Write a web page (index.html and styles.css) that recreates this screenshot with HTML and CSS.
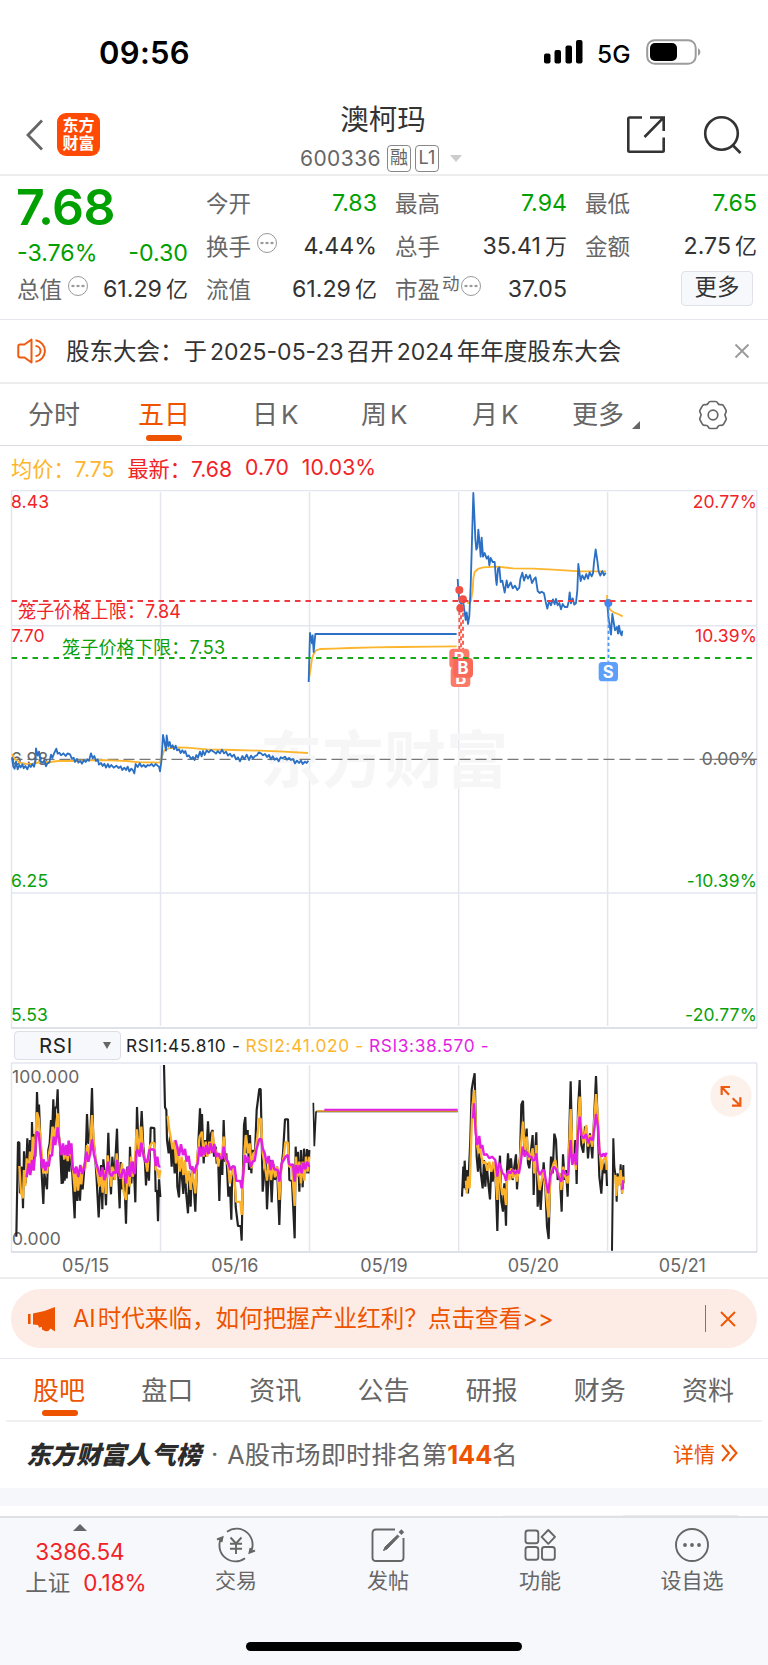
FILE: index.html
```html
<!DOCTYPE html>
<html lang="zh-CN">
<head>
<meta charset="utf-8">
<title>澳柯玛 600336</title>
<link rel="stylesheet" href="styles.css">
</head>
<body>
<div class="screen">
  <div class="status">
    <span class="clock">09:56</span>
    <div class="status-right">
      <svg width="40" height="24" viewBox="0 0 40 24"><rect x="0" y="13.500" width="6.500" height="10" rx="2"/><rect x="10.500" y="10" width="6.500" height="13.500" rx="2"/><rect x="21.500" y="5.500" width="6.500" height="18" rx="2"/><rect x="32" y="0" width="6.500" height="23.500" rx="2"/></svg>
      <span class="net">5G</span>
      <svg width="56" height="26" viewBox="0 0 56 26"><rect x="1.200" y="1.200" width="48.500" height="23.600" rx="7.500" fill="none" stroke="#9c9c9c" stroke-width="2"/><rect x="4" y="4" width="27" height="18" rx="5"/><path d="M52 9 a4.500 4.500 0 0 1 0 8z" fill="#9c9c9c"/></svg>
    </div>
  </div>

  <header class="head">
    <div class="head-left">
      <svg width="18" height="32" viewBox="0 0 18 32" fill="none" stroke="#666" stroke-width="2.800"><path d="M16 1.500 L2 16 L16 30.500"/></svg>
      <div class="logo"><span>东方</span><span>财富</span></div>
    </div>
    <div class="head-mid">
      <h1>澳柯玛</h1>
      <div class="code"><span class="num">600336</span><span class="tag">融</span><span class="tag l1">L1</span><i class="caret"></i></div>
    </div>
    <div class="head-right">
      <svg width="40" height="40" viewBox="0 0 40 40" fill="none" stroke="#333" stroke-width="2.600"><path d="M16 2.500H3.500Q2.300 2.500 2.300 3.700V35.500Q2.300 36.700 3.500 36.700H36.500Q37.700 36.700 37.700 35.500V22.500M24 2.500H37.700V16M37 3.200L18.500 22"/></svg>
      <svg width="40" height="40" viewBox="0 0 40 40" fill="none" stroke="#333" stroke-width="2.600"><circle cx="18.500" cy="18.500" r="16.300"/><path d="M29.500 30 L37.500 38"/></svg>
    </div>
  </header>

  <section class="quote">
    <div class="q1">
      <b class="price">7.68</b>
      <div class="row"><span class="g">-3.76%</span><span class="g">-0.30</span></div>
      <div class="row"><label>总值</label><i class="dots"></i><span>61.29<em>亿</em></span></div>
    </div>
    <div class="qc">
      <div class="row"><label>今开</label><span class="g">7.83</span></div>
      <div class="row"><label>换手</label><i class="dots"></i><span>4.44%</span></div>
      <div class="row"><label>流值</label><span>61.29<em>亿</em></span></div>
    </div>
    <div class="qc">
      <div class="row"><label>最高</label><span class="g">7.94</span></div>
      <div class="row"><label>总手</label><span>35.41<em>万</em></span></div>
      <div class="row"><label>市盈<sup>动</sup></label><i class="dots tight"></i><span>37.05</span></div>
    </div>
    <div class="qc">
      <div class="row"><label>最低</label><span class="g">7.65</span></div>
      <div class="row"><label>金额</label><span>2.75<em>亿</em></span></div>
      <div class="row"><button class="more">更多</button></div>
    </div>
  </section>

  <section class="news">
    <svg width="32" height="26" viewBox="0 0 32 26" fill="none" stroke="#ee5a10" stroke-width="2" stroke-linejoin="round"><path d="M14.500 1.500V24.500L7.500 19.500H3Q1.300 19.500 1.300 17.500V8.500Q1.300 6.500 3 6.500H7.500Z"/><path d="M18.500 8A5 5 0 0 1 18.500 18M18.500 2.200A10.900 10.900 0 0 1 18.500 23.800"/></svg>
    <p>股东大会：于<span class="n">2025-05-23</span>召开<span class="n">2024</span>年年度股东大会</p>
    <svg width="16" height="16" viewBox="0 0 16 16" stroke="#999" stroke-width="1.800"><path d="M1.500 1.500L14.500 14.500M14.500 1.500L1.500 14.500"/></svg>
  </section>

  <nav class="periods">
    <span>分时</span><span class="on">五日</span><span>日<i>K</i></span><span>周<i>K</i></span><span>月<i>K</i></span><span class="pm">更多<svg width="8" height="8" viewBox="0 0 8 8"><path d="M8 0V8H0Z" fill="#666"/></svg></span>
    <svg class="gear" width="30" height="30" viewBox="-15 -15 30 30" fill="none" stroke="#666" stroke-width="1.700" stroke-linejoin="round"><path d="M-2.500 -13.500H2.500Q4 -13.500 4.800 -11.800Q5.900 -9.900 8 -10.300Q9.900 -10.500 10.800 -8.800L13 -4.900Q13.700 -3.500 12.600 -2Q11.200 0 12.600 2Q13.700 3.500 13 4.900L10.800 8.800Q9.900 10.500 8 10.300Q5.900 9.900 4.800 11.800Q4 13.500 2.500 13.500H-2.500Q-4 13.500 -4.800 11.800Q-5.900 9.900 -8 10.300Q-9.900 10.500 -10.800 8.800L-13 4.900Q-13.700 3.500 -12.600 2Q-11.200 0 -12.600 -2Q-13.700 -3.500 -13 -4.900L-10.800 -8.800Q-9.900 -10.500 -8 -10.300Q-5.900 -9.900 -4.800 -11.800Q-4 -13.500 -2.500 -13.500Z"/><circle r="4.800"/></svg>
  </nav>

  <div class="legend"><span class="y">均价：7.75</span><span>最新：7.68</span><span>0.70</span><span>10.03%</span></div>

  <svg class="chart" width="768" height="539" viewBox="0 490 768 539">
    <g fill="none" stroke="#e3e6ef" stroke-width="1.500">
      <path d="M11.500 490.500H757M11.500 625.700H757M11.500 893H757M160.500 492V1026M309.500 492V1026M458.700 492V1026M607.600 492V1026M11.500 490V1028M756.800 490V1028"/>
      <path d="M11 1028H757" stroke="#d4d7e0"/>
    </g>
    <text class="mark" x="260" y="783" textLength="248" lengthAdjust="spacingAndGlyphs">东方财富</text>
    <path d="M11.500 759.300H757" stroke="#777" stroke-width="1.300" stroke-dasharray="11 5" fill="none"/>
    <g class="ax"><text x="11" y="508" class="r">8.43</text><text x="11" y="642" class="r">7.70</text><text x="11" y="764.500">6.98</text><text x="11" y="887" class="gn">6.25</text><text x="11" y="1021" class="gn">5.53</text></g>
    <g class="ax end"><text x="757" y="508" class="r">20.77%</text><text x="757" y="642" class="r">10.39%</text><text x="757" y="764.500">0.00%</text><text x="757" y="887" class="gn">-10.39%</text><text x="757" y="1021" class="gn">-20.77%</text></g>
    <path d="M702 759.300H756" stroke="#777" stroke-width="1"/>
    <g fill="none" stroke-linejoin="round" stroke-width="5.500" transform="translate(0 480) scale(.33333)">
      <polyline stroke="#fcb52c" points="36,822 45,838 60,848 85,853 105,850 120,846 150,846 175,843 220,843 260,841 300,840 350,842 380,843 420,847 455,847 480,848 486,830 492,812 505,805 530,802 560,803 620,808 700,810 780,812 850,815 924,819"/>
      <polyline stroke="#2b70c4" points="36,832 40,860 44,866 48,845 53,868 58,855 62,862 67,853 71,865 76,858 82,868 87,855 92,861 97,852 102,860 106,845 108,805 113,827 117,815 122,845 128,848 133,841 138,859 142,850 148,848 153,824 157,834 162,821 169,806 173,821 178,818 183,826 190,820 197,828 203,820 210,823 216,837 221,833 225,846 231,837 235,848 241,843 246,851 252,840 257,846 262,838 267,842 273,820 278,835 283,828 288,843 293,838 297,854 303,849 308,858 313,851 318,863 324,852 328,862 334,855 341,863 349,857 356,864 362,859 367,870 373,863 378,870 383,860 388,874 394,866 399,871 403,880 407,852 413,861 419,850 425,860 431,855 437,861 443,855 449,857 455,852 461,859 467,852 473,857 477,860 480,874 484,845 489,765 494,790 498,812 500,766 505,799 509,786 513,803 518,796 522,808 527,797 531,811 537,808 542,819 547,811 552,819 556,813 561,829 567,826 573,837 579,831 584,840 589,825 594,833 600,815 605,829 609,813 614,825 620,811 626,817 633,810 641,815 648,821 653,813 660,820 666,809 672,820 678,815 684,827 690,821 696,830 702,824 708,838 714,832 720,844 727,828 733,838 740,824 747,840 753,827 759,835 765,828 771,826 776,817 783,820 789,826 795,822 801,831 807,825 813,838 818,829 824,839 830,835 836,844 842,832 848,835 855,830 861,839 867,834 873,840 879,837 885,850 891,842 897,849 903,842 908,852 915,845 920,849 925,842"/>
    </g>
    <g fill="none" stroke-linejoin="round" stroke-width="5.500" transform="translate(300 480) scale(.33333)">
      <polyline stroke="#fcb52c" points="26,602 32,565 36,535 41,522 47,512 60,507 100,506 150,504 220,502 300,501 400,500 470,499"/>
      <polyline stroke="#2b70c4" points="26,606 30,459 36,490 38,466 41,516 46,462 470,462"/>
      <polyline stroke="#fcb52c" points="501,368 507,370 513,362 518,330 520,295 524,276 534,267 550,262 590,260 640,265 700,266 760,269 840,274 918,274"/>
      <polyline stroke="#2b70c4" points="473,297 475,330 478,362 484,372 488,354 493,390 497,420 500,397 504,432 508,408 512,320 516,180 520,39 524,125 526,177 529,209 532,203 535,149 540,202 542,230 545,173 549,230 554,219 560,236 565,229 568,256 572,234 578,246 584,246 588,300 590,315 594,266 598,262 602,306 607,302 614,338 620,301 624,323 632,307 638,325 645,317 652,330 658,323 661,297 667,278 672,302 678,284 684,296 690,285 696,309 703,296 707,292 713,333 719,339 725,335 732,340 737,365 742,386 747,364 753,376 759,358 764,373 768,357 773,376 778,369 783,388 788,372 794,381 802,381 806,365 809,337 813,370 818,355 823,374 828,369 832,330 835,252 839,283 842,303 847,286 853,298 859,282 864,296 869,277 875,289 879,280 882,247 887,208 892,242 896,275 901,287 907,273 912,286 917,278"/>
      <polyline stroke="#fcb52c" points="921,345 923,375 931,390 941,397 954,402 968,409"/>
      <polyline stroke="#2b70c4" points="921,360 925,410 928,429 933,464 937,402 941,426 945,451 951,441 954,461 957,437 961,459 965,466 967,452"/>
      <g stroke="#f75a4a" stroke-dasharray="12 9"><path d="M478 330V510M483 385V560M489 356V540"/></g>
      <g fill="#f05046" stroke="none"><circle cx="478" cy="330" r="12"/><circle cx="489" cy="358" r="12"/><circle cx="481" cy="385" r="12"/></g>
      <g stroke="none"><rect x="448" y="506" width="60" height="58" rx="11" fill="#fb7a68"/><text class="mk" x="478" y="555">B</text><rect x="452" y="562" width="59" height="59" rx="11" fill="#fb7a68"/><text class="mk" x="482" y="612">B</text><rect x="460" y="534" width="59" height="59" rx="11" fill="#fa6858"/><text class="mk" x="489" y="583">B</text></g>
      <path d="M925.500 380V545" stroke="#4e96f5" stroke-dasharray="10 8"/><circle cx="925" cy="369" r="12" fill="#4287ee"/>
      <rect x="896" y="546" width="58" height="58" rx="11" fill="#5ca0fb"/><text class="mk" x="925" y="595">S</text>
    </g>
    <path d="M11.500 601H757" stroke="#ee3a40" stroke-width="2" stroke-dasharray="5.500 5" fill="none"/>
    <path d="M11.500 658H757" stroke="#18a81c" stroke-width="2" stroke-dasharray="5.500 5" fill="none"/>
    <text class="cage r" x="18" y="618" textLength="163">笼子价格上限：7.84</text>
    <text class="cage gn" x="62" y="654" textLength="163">笼子价格下限：7.53</text>
  </svg>

  <div class="tool"><div class="select"><span>RSI</span><i></i></div><span>RSI1:45.810 -</span><span class="y">RSI2:41.020 -</span><span class="m">RSI3:38.570 -</span></div>

  <div class="rsi">
  <svg class="chart" width="768" height="191" viewBox="0 1062 768 191">
    <g fill="none" stroke="#e3e6ef" stroke-width="1.500"><path d="M11 1063H757M160.500 1065V1251M309.500 1065V1251M458.700 1065V1251M607.600 1065V1251M11.500 1063V1252M756.800 1063V1252"/><path d="M11 1252H757" stroke="#d4d7e0"/></g>
    <g class="ax"><text x="12" y="1082.500">100.000</text><text x="12" y="1245">0.000</text></g>
    <g fill="none" stroke-linejoin="bevel" transform="translate(0 1010) scale(.33333)">
      <polyline stroke="#222" stroke-width="6.500" points="49,680 54,396 58,398 60,550 66,470 69,595 72,424 77,520 82,385 86,490 90,390 94,460 96,336 99,450 103,372 106,440 109,340 111,246 114,330 117,284 121,390 126,510 130,582 133,490 137,515 141,538 145,420 149,400 153,330 157,350 160,268 163,370 166,292 170,293 173,238 176,370 180,405 185,522 187,420 189,520 192,450 194,512 196,430 200,505 204,420 208,485 213,402 217,490 224,625 227,490 232,573 235,480 240,572 244,490 248,538 253,475 257,440 261,312 265,400 269,397 272,350 276,234 280,390 285,430 290,510 296,622 300,540 303,465 307,598 310,448 313,480 318,586 322,458 325,368 329,490 333,553 337,440 343,510 351,356 355,500 359,595 362,456 367,538 373,500 378,641 382,470 387,553 390,410 394,520 398,455 403,508 406,577 411,291 416,420 419,430 425,303 430,410 435,460 438,526 443,448 447,512 452,353 463,354 467,545 471,541 474,634 477,508 481,561"/>
      <polyline stroke="#222" stroke-width="6.500" points="492,165 495,292 499,300 501,390 506,430 510,380 515,470 519,400 524,490 529,407 532,530 537,562 541,466 545,492 550,552 554,460 558,545 564,610 568,490 572,590 576,470 582,542 586,605 590,490 595,400 600,295 604,420 606,312 611,460 615,390 619,440 624,334 629,430 633,370 638,360 642,440 647,410 650,461 654,430 658,573 662,430 667,495 671,330 675,455 679,430 685,560 690,530 694,629 697,470 703,470 707,590 714,648 722,648 725,692 729,480 732,345 736,321 740,430 743,360 747,480 750,375 754,490 758,420 765,430 770,300 778,237 782,237 786,430 788,545 793,490 797,460 801,598 806,490 810,450 815,577 820,462 825,510 831,470 838,645 843,480 849,430 855,328 864,328 868,510 876,513 880,600 884,685 887,410 891,500 894,425 898,545 903,420 908,532 912,416 917,490 921,417 925,490 928,420"/>
      <polyline stroke="#fcb22b" stroke-width="7" points="58,468 63,548 69,565 72,480 76,528 80,445 85,490 90,425 95,478 98,380 104,440 108,345 111,307 116,325 120,370 126,440 130,490 136,478 141,490 147,430 153,400 158,350 162,382 167,355 173,310 177,380 183,430 188,410 193,448 198,412 203,453 209,410 214,440 219,480 225,545 228,470 234,542 240,490 244,523 249,470 256,475 261,405 267,440 271,395 276,315 281,390 286,445 292,490 298,530 303,485 308,548 312,480 318,552 323,436 328,475 333,530 337,470 345,510 350,430 355,480 361,506 366,460 371,545 378,570 383,480 389,530 393,440 398,500 404,470 408,385 411,358 417,430 424,350 430,430 436,448 442,485 449,410 456,398 464,400 467,480 472,478 477,505 481,480"/>
      <polyline stroke="#fcb22b" stroke-width="7" points="503,318 508,360 512,382 518,418 524,392 528,460 533,410 539,485 545,440 550,495 555,450 560,520 566,482 572,540 577,480 582,520 586,550 592,440 599,380 606,365 611,440 617,395 622,440 628,395 633,430 638,365 643,425 648,418 655,470 660,430 666,440 671,380 677,450 684,465 690,520 698,470 704,510 708,575 721,576 725,615 730,490 734,415 738,375 744,430 749,400 755,475 760,430 766,425 772,380 778,325 783,328 788,430 795,470 801,512 807,455 813,510 819,462 825,502 832,470 838,570 844,470 851,440 856,397 863,397 868,470 876,472 884,588 888,440 893,500 898,455 903,520 908,455 913,512 918,440 923,485 928,440"/>
      <polyline stroke="#e31fe3" stroke-width="7.500" points="80,502 86,460 91,495 96,450 101,482 106,420 110,365 116,370 120,410 126,475 131,448 136,482 141,455 146,470 151,435 156,438 161,380 166,405 173,352 178,395 184,435 189,400 194,435 199,405 203,438 206,392 210,432 214,400 218,470 224,490 229,470 235,500 241,465 247,492 253,472 259,425 265,455 271,430 276,388 282,435 289,460 295,480 301,500 307,472 313,510 318,495 324,455 329,490 335,498 341,485 347,490 351,450 357,490 363,505 369,478 373,480 378,520 384,470 390,500 395,455 401,490 405,490 409,425 414,420 419,440 424,398 431,440 437,455 442,455 448,420 455,418 463,420 467,468 472,440 476,470 481,468"/>
      <polyline stroke="#e31fe3" stroke-width="7.500" points="526,390 532,412 537,437 543,403 549,435 555,417 560,455 566,438 571,477 577,470 583,490 588,470 593,460 599,410 604,440 609,410 614,435 619,405 625,432 631,400 637,428 643,402 648,440 655,430 661,445 667,445 671,410 677,445 684,455 691,480 697,470 704,470 709,512 721,513 725,535 730,490 735,435 740,458 745,440 752,470 758,455 764,452 769,420 778,387 784,388 788,415 794,430 800,460 806,438 812,480 817,450 823,478 833,480 838,515 845,460 851,450 857,440 863,435 867,462 873,465 879,463 884,515 889,465 894,490 899,465 905,490 910,458 916,478 921,455 928,470"/>
    </g>
    <g fill="none" stroke-linejoin="bevel" transform="translate(300 1010) scale(.33333)">
      <path d="M40 278L43 409L48 306L52 304H473" stroke="#222" stroke-width="5"/><path d="M50 303H473" stroke="#fcb22b" stroke-width="4"/><path d="M73 299H473" stroke="#e31fe3" stroke-width="6"/>
      <polyline stroke="#222" stroke-width="6.500" points="486,560 490,470 492,535 494,452 498,540 501,480 504,550 507,478 511,390 515,240 519,215 524,190 527,330 530,440 534,485 539,420 542,485 548,535 552,450 556,530 560,460 565,520 570,568 574,470 578,515 583,470 587,510 592,663 596,500 600,437 604,575 609,605 613,520 618,647 621,480 624,430 628,480 633,445 638,510 643,470 648,433 651,538 656,465 660,445 664,284 669,272 673,430 680,356 684,460 688,475 693,420 698,375 701,555 705,430 709,367 713,590 717,520 722,600 726,530 731,457 736,530 741,650 746,687 750,520 753,440 758,490 763,371 768,390 773,510 779,490 785,605 789,433 794,510 798,480 803,560 807,400 812,214 817,440 822,460 826,390 830,522 834,300 839,210 844,405 850,428 855,350 859,355 864,445 870,370 877,445 882,330 888,198 893,330 898,500 904,551 909,460 913,490 918,450 921,528"/>
      <polyline stroke="#fcb22b" stroke-width="7" points="498,512 500,550 504,500 509,535 513,410 517,290 523,240 527,335 531,405 536,430 540,400 544,440 550,460 556,455 562,482 568,455 574,485 580,455 586,490 592,570 597,465 602,520 607,555 612,535 618,585 622,490 628,510 633,475 639,505 645,480 651,515 656,480 661,430 665,380 669,335 674,420 680,380 686,450 693,435 698,415 703,490 709,405 713,490 719,540 725,510 731,480 737,530 742,590 746,622 750,530 755,480 761,460 766,450 772,490 778,490 784,540 790,470 796,500 803,520 808,400 812,297 818,430 824,440 828,480 833,350 839,260 844,360 850,400 859,345 864,410 869,375 877,410 883,330 888,252 894,330 898,410 904,480 910,450 918,440 920,480"/>
      <polyline stroke="#e31fe3" stroke-width="7" points="519,325 522,280 527,370 532,405 538,378 542,415 547,405 552,435 560,432 568,445 576,440 586,450 592,500 597,458 602,470 607,488 613,495 618,512 624,482 631,490 638,478 645,492 651,482 657,490 662,460 668,410 674,440 680,425 687,440 694,440 698,452 704,450 709,430 714,480 720,495 727,480 733,482 739,520 745,550 750,500 756,485 762,470 769,480 776,500 784,515 789,480 796,492 804,495 809,430 812,390 817,465 823,430 828,465 834,370 839,320 844,375 851,385 858,372 865,400 871,382 878,392 884,350 888,312 894,350 899,430 905,440 911,430 915,440 920,428"/>
      <path d="M936 722L940 385L943 470L947 500L950 575L953 490L958 525L962 463L966 550L970 465L971 520" stroke="#222" stroke-width="6"/><path d="M946 495L949 558L953 500L957 525L962 480L967 550L971 500" stroke="#fcb22b" stroke-width="7"/><path d="M965 540L969 510L970 538" stroke="#e31fe3" stroke-width="5"/>
      <circle cx="1293" cy="258" r="62" fill="#fdf1eb"/><path d="M1265 255V231H1290M1267 233L1287 254M1296 287H1321V262M1319 285L1298 265" stroke="#ee5a10" stroke-width="6.500" stroke-linejoin="miter"/>
    </g>
  </svg>
  <div class="dates"><span>05/15</span><span>05/16</span><span>05/19</span><span>05/20</span><span>05/21</span></div>
  </div>

  <section class="promo"><div class="pill">
    <svg width="28" height="26" viewBox="0 0 28 26" fill="#ee5400"><rect x="0" y="8" width="2.600" height="10"/><path d="M5 7.500Q16 6 27 1V25.500L22.500 22.500Q20.500 26 17 25L14 23.500V21L11 21.500L10 19Q7 18.500 5 18.500Z"/></svg>
    <p>AI<span class="ai">时代来临，如何把握产业红利？点击查看&gt;&gt;</span></p>
    <i></i><svg width="16" height="16" viewBox="0 0 16 16" stroke="#ee5400" stroke-width="1.800"><path d="M1 1L15 15M15 1L1 15"/></svg>
  </div></section>

  <nav class="tabs"><span class="on">股吧</span><span>盘口</span><span>资讯</span><span>公告</span><span>研报</span><span>财务</span><span>资料</span></nav>

  <section class="rank"><b class="brand">东方财富人气榜</b><span class="dot">·</span><p>A股市场即时排名第<b>144</b>名</p><a>详情<svg width="17" height="18" viewBox="0 0 17 18" fill="none" stroke="#ee5400" stroke-width="2"><path d="M1 1L8 9L1 17M8.500 1L15.500 9L8.500 17"/></svg></a></section>
  <div class="band"></div>
  <div class="peek"><i></i><i></i></div>

  <footer class="bar">
    <div class="index"><i></i><span class="r">3386.54</span><div>上证<span class="r">0.18%</span></div></div>
    <div class="item"><svg width="40" height="36" viewBox="0 0 40 36" fill="none" stroke="#666" stroke-width="1.900"><path d="M11 4.800A16 16 0 0 1 34.500 25.500M29 31.200A16 16 0 0 1 5.500 10.500M1 12.500L6.500 10.200L5.500 15M39 23.500L33.500 25.800L34.500 21M14.500 10.500L20 16.500L25.500 10.500M20 16.500V27M14 16.800H26M14 21.800H26"/></svg>交易</div>
    <div class="item"><svg width="40" height="36" viewBox="0 0 40 36" fill="none" stroke="#666" stroke-width="1.900"><path d="M27 2.500H8Q4.500 2.500 4.500 6V30.500Q4.500 34 8 34H32Q35.500 34 35.500 30.500V11"/><path d="M29.500 8L17 20L15.500 23.500L19 22L31 9.500Z" fill="#666" stroke-width="1"/><path d="M32 6.500L34.800 3.800" stroke-width="4"/></svg>发帖</div>
    <div class="item"><svg width="40" height="36" viewBox="0 0 40 36" fill="none" stroke="#666" stroke-width="1.900"><rect x="5.500" y="3.500" width="12.800" height="12.800" rx="2.500"/><rect x="5.500" y="20" width="12.800" height="12.800" rx="2.500"/><rect x="22" y="20" width="12.800" height="12.800" rx="2.500"/><path d="M28.300 3L35 9.900L28.300 16.800L21.600 9.900Z" stroke-linejoin="round"/></svg>功能</div>
    <div class="item"><svg width="40" height="36" viewBox="0 0 40 36" fill="none" stroke="#666" stroke-width="1.900"><circle cx="20" cy="18" r="16"/><g fill="#666" stroke="none"><circle cx="13" cy="18" r="1.900"/><circle cx="20" cy="18" r="1.900"/><circle cx="27" cy="18" r="1.900"/></g></svg>设自选</div>
    <div class="home"></div>
  </footer>
</div>
</body>
</html>
```
FILE: styles.css
```css
* { box-sizing: border-box; margin: 0; padding: 0; }
body { background: #fff; font-family: Inter, "Noto Sans CJK SC", sans-serif; color: #333; }
i, em { font-style: normal; }
svg { display: block; flex: none; }
.screen { width: 768px; height: 1665px; overflow: hidden; display: flex; flex-direction: column; }
.screen > * { flex: none; }
.r { color: #f22226; fill: #f22226; }
.gn { fill: #0aa00a; }
.y { color: #fcb52c; }
.m { color: #e31fe3; }

.status { height: 100px; padding: 4px 67px 0 99px; display: flex; align-items: center; justify-content: space-between; color: #000; }
.clock { font-size: 31px; font-weight: 600; line-height: 40px; letter-spacing: .3px; padding-top: 2px; }
.status-right { display: flex; align-items: center; margin-right: -1px; }
.net { font-size: 24.500px; font-weight: 500; margin: 3px 16px 0 13px; width: 33px; line-height: 26px; }

.head { height: 76px; border-bottom: 2px solid #ededf0; display: grid; grid-template-columns: 250px 1fr 250px; }
.head-left { display: flex; align-items: center; padding: 0 0 8px 26px; gap: 13px; }
.head-left svg { margin-top: 2px; }
.logo { width: 43px; height: 43px; border-radius: 9px; background: #ff4a05; color: #fff; font-size: 16px; font-weight: 700; line-height: 18px; display: flex; flex-direction: column; align-items: center; justify-content: center; }
.head-mid { display: flex; flex-direction: column; align-items: center; padding-right: 2px; }
h1 { font-size: 28.500px; font-weight: 400; line-height: 40px; }
.code { display: flex; align-items: center; color: #666; height: 36px; gap: 4px; padding-right: 4px; }
.num { font-size: 21px; letter-spacing: .4px; margin-right: 2px; }
.tag { border: 1.500px solid #888; border-radius: 4px; font-size: 18px; line-height: 23px; height: 27px; width: 24px; text-align: center; }
.caret { border: 6px solid transparent; border-top: 7px solid #ccc; border-bottom: 0; margin-left: 7px; }
.head-right { display: flex; justify-content: flex-end; gap: 37px; padding: 15px 25px 0 0; }

.quote { height: 144px; border-bottom: 1px solid #e3e6ef; padding: 6px 11px 0 17px; display: grid; grid-template-columns: 171px 171px 172px 172px; column-gap: 18px; font-size: 23.200px; }
.price { display: block; height: 50px; line-height: 50px; font-size: 50px; font-weight: 600; color: #00a000; letter-spacing: -.5px; margin-left: -1px; }
.row { display: flex; align-items: center; height: 43px; line-height: 43px; color: #333; }
.q1 .row:nth-of-type(1) { height: 43px; }
.q1 .row:nth-of-type(2) { height: 29px; }
.row > span { margin-left: auto; }
.row > span.g:first-child { margin-left: 0; }
.g { color: #00a000; }
.row em { margin-left: 4px; font-size: 22px; }
.row label { color: #666; font-size: 22.500px; }
.dots { width: 20px; height: 20px; border: 1.700px solid #999; border-radius: 50%; margin: -7px 0 0 6px; background: radial-gradient(circle, #999 1.100px, transparent 1.600px) center / 5px 20px repeat-x; background-clip: content-box; padding: 0 1px; }
.tight { margin-left: 1px; }
sup { font-size: 17.500px; vertical-align: 8px; line-height: 0; margin-left: 2px; }
.more { margin-left: auto; margin-right: 4px; width: 72px; height: 35px; border: 1.500px solid #dfe2ea; border-radius: 4px; background: #f7f8fb; font: inherit; font-size: 22.500px; line-height: 28px; padding-bottom: 3px; color: #333; margin-top: -2px; }

.news { height: 64px; border-bottom: 2px solid #ededf0; padding: 0 18px 0 17px; display: flex; align-items: center; }
.news p { font-size: 23.500px; margin: -3px 0 0 17px; flex: 1; white-space: nowrap; }
.n { margin: 0 3px; font-size: 23px; }

.periods { height: 62px; border-bottom: 1.500px solid #d9dbe2; display: flex; align-items: center; padding: 0 0 0 28px; font-size: 26px; color: #666; }
.periods > span { position: relative; width: 52px; margin: -4px 58px 0 0; white-space: nowrap; }
.periods > span:nth-of-type(2) { margin-right: 62px; }
.periods i { margin-left: 3px; }
.periods > span:nth-of-type(3) { margin-right: 57px; }
.periods > span:nth-of-type(4) { margin-right: 59px; }
.periods > span:nth-of-type(5) { margin-right: 48px; }
.periods .pm { display: flex; gap: 8px; align-items: flex-end; margin-right: 74px; }
.pm svg { margin-bottom: 2px; }
.on { color: #ee5400; }
.on::after { content: ""; position: absolute; left: 8px; bottom: -10px; width: 36px; height: 6px; border-radius: 3px; background: #ee5400; }

.legend { height: 44px; padding: 0 0 2px 11px; display: flex; align-items: center; gap: 13px; font-size: 21.200px; color: #f22226; }
.ax text { font-size: 17.500px; fill: #666; letter-spacing: .15px; }
.ax text.r { fill: #f22226; }
.ax text.gn { fill: #0aa00a; }
.end { text-anchor: end; }
.mark { font-size: 62px; font-weight: 700; fill: #f6f6f7; }
.mk { font-size: 50px; font-weight: 700; fill: #fff; text-anchor: middle; }
.cage { font-size: 18px; }

.tool { height: 33px; display: flex; align-items: center; padding-left: 14px; gap: 5px; font-size: 17.300px; letter-spacing: .65px; color: #222; white-space: nowrap; }
.tool .y { color: #fcb52c; }
.tool .m { color: #e31fe3; }
.select { width: 107px; height: 29px; border: 1px solid #dcdfe6; border-radius: 4px; background: #f7f8fb; display: flex; align-items: center; justify-content: space-between; padding: 0 9px 0 24px; font-size: 20.500px; }
.select i { border: 4px solid transparent; border-top: 7px solid #666; border-bottom: 0; }
.rsi { height: 217px; border-bottom: 2px solid #ededf0; }
.dates { display: grid; grid-template-columns: repeat(5, 1fr); padding: 0 11px; text-align: center; font-size: 18px; line-height: 26px; color: #666; }

.promo { height: 80px; padding: 10px 11px 0; border-bottom: 1.500px solid #e8e9ee; }
.pill { height: 59px; border-radius: 30px; background: #fdece5; color: #ee5400; display: flex; align-items: center; padding: 0 21px 0 17px; font-size: 23.600px; }
.pill p { margin: -3px 0 0 17px; flex: 1; white-space: nowrap; }
.ai { margin-left: 2px; }
.pill i { width: 1.500px; height: 27px; background: #ee5400; margin-right: 14px; }

.tabs { height: 63px; margin: 0 6px; border-bottom: 2px solid #f0f0f2; display: flex; padding: 0 28px 2px 27px; justify-content: space-between; align-items: center; font-size: 26px; color: #666; }
.tabs span { position: relative; }
.tabs .on::after { bottom: -9px; left: 9px; }
.rank { height: 66px; display: flex; align-items: center; padding: 0 30px 4px 26px; font-size: 25.300px; color: #666; white-space: nowrap; }
.brand { color: #2b2b2b; font-weight: 900; font-style: italic; font-size: 25px; }
.dot { margin: 0 9px 0 10px; }
.rank p b { color: #ee5400; font-weight: 700; }
.rank a { margin-left: auto; color: #ee5400; font-size: 21px; display: flex; align-items: center; gap: 6px; }
.band { height: 18px; background: #f6f7fa; }
.peek { height: 11px; display: flex; align-items: flex-end; justify-content: flex-end; padding-right: 30px; }
.peek i { width: 120px; height: 2px; background: #f6f6f8; }
.peek i + i { width: 115px; background: #ebebee; }

.bar { height: 149px; border-top: 2px solid #dfe1e7; margin-top: -1px; background: #f7f8fb; position: relative; display: grid; grid-template-columns: 160px repeat(4, 152px); font-size: 21px; color: #666; }
.index { display: flex; flex-direction: column; align-items: center; font-size: 22.500px; padding-top: 6px; }
.index > i { border: 7px solid transparent; border-bottom: 7px solid #666; border-top: 0; }
.index > span { line-height: 31px; margin-top: 5px; }
.index div { line-height: 31px; white-space: nowrap; padding-left: 12px; }
.index div .r { margin-left: 13px; }
.item { display: flex; flex-direction: column; align-items: center; padding-top: 9px; gap: 2px; line-height: 31px; }
.home { position: absolute; left: 246px; top: 124px; width: 276px; height: 9px; border-radius: 5px; background: #000; }
```
